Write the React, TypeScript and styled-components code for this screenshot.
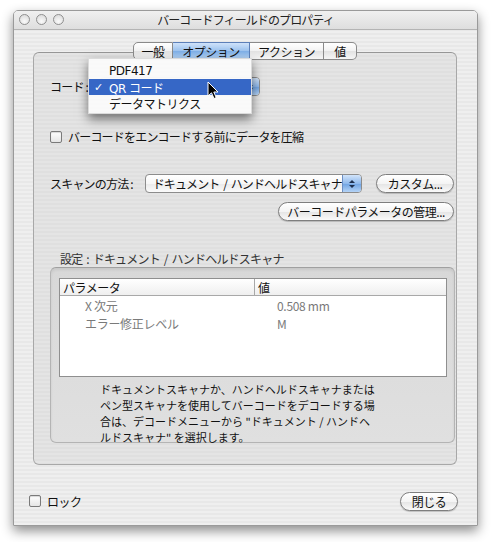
import React from "react";
import styled, { createGlobalStyle, css } from "styled-components";

const GlobalStyle = createGlobalStyle`
  body {
    margin: 0;
    background: #ffffff;
    font-family: "Noto Sans CJK JP", "Noto Sans", sans-serif;
    color: #111;
  }
`;

const Page = styled.div`
  width: 493px;
  height: 542px;
  padding: 10px 0 0 13px;
  box-sizing: border-box;
  overflow: hidden;
`;

const Window = styled.div`
  position: relative;
  width: 465px;
  height: 516px;
  box-sizing: border-box;
  border: 1px solid #9a9a9a;
  border-radius: 5px 5px 0 0;
  background: repeating-linear-gradient(
    to bottom,
    #efefef 0px,
    #efefef 2px,
    #e8e8e8 2px,
    #e8e8e8 4px
  );
  box-shadow: 0 5px 12px rgba(0, 0, 0, 0.45);
  display: flex;
  flex-direction: column;
  font-size: 12px;
`;

const TitleBar = styled.div`
  height: 19px;
  box-sizing: border-box;
  border-bottom: 1px solid #b4b4b4;
  border-radius: 4px 4px 0 0;
  background: linear-gradient(to bottom, #f0f0f0, #dedede);
  display: flex;
  align-items: center;
  padding: 0 5px 2px 5px;
`;

const Lights = styled.div`
  width: 60px;
  display: flex;
  gap: 6px;
`;

const Light = styled.span`
  width: 11px;
  height: 11px;
  box-sizing: border-box;
  border-radius: 50%;
  border: 1px solid #8f8f8f;
  background: radial-gradient(circle at 50% 70%, #fafafa, #d6d6d6);
`;

const Title = styled.div`
  flex: 1;
  text-align: center;
  font-size: 12px;
  letter-spacing: -0.9px;
  color: #222;
`;

const Body = styled.div`
  flex: 1;
  display: flex;
  flex-direction: column;
  padding: 12px 20px 0 19px;
`;

const TabArea = styled.div`
  position: relative;
  display: flex;
  flex-direction: column;
`;

const TabRow = styled.div`
  position: relative;
  z-index: 1;
  display: flex;
  justify-content: center;
  height: 18px;
`;

const Tab = styled.div<{ $active?: boolean; $w: number; $first?: boolean; $last?: boolean }>`
  width: ${(p) => p.$w}px;
  box-sizing: border-box;
  display: flex;
  align-items: center;
  justify-content: center;
  font-size: 12px;
  letter-spacing: -0.5px;
  border: 1px solid #8a8a8a;
  border-left: ${(p) => (p.$first ? "1px solid #8a8a8a" : "none")};
  border-radius: ${(p) =>
    p.$first ? "5px 0 0 5px" : p.$last ? "0 5px 5px 0" : "0"};
  background: linear-gradient(to bottom, #ffffff 0%, #f2f2f2 50%, #e2e2e2 51%, #f6f6f6 100%);
  ${(p) =>
    p.$active &&
    css`
      border-color: #5c7fb8;
      background: linear-gradient(to bottom, #cfe2fa 0%, #9cc2ee 50%, #7eaee6 51%, #b8d6f7 100%);
    `}
`;

const TabBox = styled.div`
  position: relative;
  margin-top: -8px;
  height: 413px;
  box-sizing: border-box;
  border: 1px solid #a8a8a8;
  border-top-color: #969696;
  border-radius: 6px;
  background: repeating-linear-gradient(
    to bottom,
    #e4e4e4 0px,
    #e4e4e4 2px,
    #dfdfdf 2px,
    #dfdfdf 4px
  );
  padding: 25px 2px 0 16px;
  display: flex;
  flex-direction: column;
`;

const FieldRow = styled.div<{ $top: number; $h: number }>`
  display: flex;
  align-items: center;
  height: ${(p) => p.$h}px;
  margin-top: ${(p) => p.$top}px;
`;

const Label = styled.span<{ $w?: number }>`
  font-size: 12px;
  letter-spacing: -0.8px;
  white-space: nowrap;
  width: ${(p) => (p.$w ? `${p.$w}px` : "auto")};
`;

const Popup = styled.div<{ $w: number }>`
  position: relative;
  width: ${(p) => p.$w}px;
  height: 19px;
  box-sizing: border-box;
  border: 1px solid #8c8c8c;
  border-radius: 4px;
  background: linear-gradient(to bottom, #ffffff 0%, #f7f7f7 50%, #eaeaea 51%, #fbfbfb 100%);
  display: flex;
  align-items: center;
  overflow: hidden;
`;

const PopupText = styled.span`
  flex: 1;
  padding-left: 7px;
  font-size: 12px;
  letter-spacing: -0.9px;
  word-spacing: 2px;
  white-space: nowrap;
`;

const Stepper = styled.span`
  width: 18px;
  align-self: stretch;
  border-left: 1px solid #6d8fc4;
  background: linear-gradient(to bottom, #d2e4fa 0%, #8fb9ec 50%, #6ea2e2 51%, #b4d3f6 100%);
  display: flex;
  flex-direction: column;
  align-items: center;
  justify-content: center;
  gap: 2px;
`;

const Arrow = styled.span<{ $down?: boolean }>`
  width: 0;
  height: 0;
  border-left: 3px solid transparent;
  border-right: 3px solid transparent;
  ${(p) =>
    p.$down
      ? css`border-top: 3px solid #1d2f4d;`
      : css`border-bottom: 3px solid #1d2f4d;`}
`;

const Button = styled.div<{ $w: number; $ml?: number }>`
  width: ${(p) => p.$w}px;
  margin-left: ${(p) => (p.$ml ? `${p.$ml}px` : "0")};
  height: 19px;
  box-sizing: border-box;
  border: 1px solid #7e7e7e;
  border-radius: 10px;
  background: linear-gradient(to bottom, #ffffff 0%, #f4f4f4 50%, #e4e4e4 51%, #fafafa 100%);
  box-shadow: 0 1px 1px rgba(0, 0, 0, 0.2);
  display: flex;
  align-items: center;
  justify-content: center;
  font-size: 12px;
  letter-spacing: -0.5px;
  white-space: nowrap;
`;

const RightRow = styled.div`
  display: flex;
  justify-content: flex-end;
  margin-top: 9px;
  height: 19px;
`;

const Check = styled.span`
  width: 12px;
  height: 12px;
  box-sizing: border-box;
  border: 1px solid #7a7a7a;
  border-radius: 2px;
  background: linear-gradient(to bottom, #ffffff, #e6e6e6);
  box-shadow: inset 0 1px 1px rgba(0, 0, 0, 0.15);
  margin-right: 6px;
  flex-shrink: 0;
`;

const GroupLabel = styled.div`
  margin-top: 31px;
  padding-left: 10px;
  height: 14px;
  line-height: 14px;
  font-size: 12px;
  letter-spacing: -0.8px;
  word-spacing: 2px;
  color: #333;
`;

const Group = styled.div`
  margin-top: 1px;
  height: 176px;
  margin-right: -1px;
  box-sizing: border-box;
  border: 1px solid #b4b4b4;
  border-top-color: #a0a0a0;
  border-radius: 6px;
  background: linear-gradient(to bottom, #d8d8d8, #e0e0e0);
  box-shadow: inset 0 2px 3px rgba(0, 0, 0, 0.08);
  padding: 10px 7px 0 8px;
  display: flex;
  flex-direction: column;
`;

const Table = styled.div`
  height: 99px;
  flex-shrink: 0;
  box-sizing: border-box;
  border: 1px solid #8f8f8f;
  background: #ffffff;
`;

const HeadRow = styled.div`
  display: grid;
  grid-template-columns: 194px 1fr;
  height: 16px;
  border-bottom: 1px solid #a8a8a8;
  background: linear-gradient(to bottom, #ffffff, #efefef);
`;

const HeadCell = styled.div<{ $sep?: boolean }>`
  display: flex;
  align-items: center;
  padding-left: 3px;
  font-size: 12px;
  letter-spacing: -0.5px;
  border-left: ${(p) => (p.$sep ? "1px solid #a8a8a8" : "none")};
`;

const DataRow = styled.div`
  display: grid;
  grid-template-columns: 194px 1fr;
  height: 18px;
`;

const DataCell = styled.div<{ $pl: number }>`
  display: flex;
  align-items: center;
  padding-left: ${(p) => p.$pl}px;
  font-size: 12px;
  letter-spacing: -0.3px;
  color: #7a7a7a;
`;

const Note = styled.div`
  margin-top: 4px;
  padding-left: 41px;
  font-size: 11px;
  line-height: 16px;
  white-space: nowrap;
  color: #111;
`;

const Footer = styled.div`
  flex: 1;
  display: flex;
  align-items: center;
  justify-content: space-between;
  padding: 12px 0 0 0;
  margin-left: -4px;
  margin-right: -1px;
`;

const CheckLabel = styled.label`
  display: flex;
  align-items: center;
  font-size: 12px;
  letter-spacing: -0.5px;
`;

const Menu = styled.div`
  position: absolute;
  left: 54px;
  top: 5px;
  width: 164px;
  height: 56px;
  box-sizing: border-box;
  padding-top: 4px;
  background: rgba(250, 250, 250, 0.97);
  border: 1px solid rgba(0, 0, 0, 0.12);
  box-shadow: 0 5px 10px rgba(0, 0, 0, 0.5);
  z-index: 3;
`;

const MenuItem = styled.div<{ $hl?: boolean }>`
  position: relative;
  height: 16px;
  display: flex;
  align-items: center;
  padding-left: 20px;
  font-family: "DejaVu Sans", "Noto Sans CJK JP", sans-serif;
  font-size: 12px;
  letter-spacing: -0.5px;
  color: ${(p) => (p.$hl ? "#ffffff" : "#111")};
  background: ${(p) => (p.$hl ? "#3667c6" : "transparent")};
`;

const Tick = styled.span`
  position: absolute;
  left: 5px;
  font-size: 11px;
`;

const Cursor = styled.svg`
  position: absolute;
  left: 173px;
  top: 28px;
  z-index: 4;
`;

export default function App() {
  return (
    <>
      <GlobalStyle />
      <Page>
        <Window>
          <TitleBar>
            <Lights>
              <Light />
              <Light />
              <Light />
            </Lights>
            <Title>バーコードフィールドのプロパティ</Title>
            <Lights />
          </TitleBar>
          <Body>
            <TabArea>
              <TabRow>
                <Tab $w={40} $first>一般</Tab>
                <Tab $w={77} $active>オプション</Tab>
                <Tab $w={74}>アクション</Tab>
                <Tab $w={33} $last>値</Tab>
              </TabRow>
              <TabBox>
                <FieldRow $top={0} $h={17}>
                  <Label $w={50}>コード :</Label>
                  <Popup $w={160}>
                    <PopupText />
                    <Stepper>
                      <Arrow />
                      <Arrow $down />
                    </Stepper>
                  </Popup>
                </FieldRow>

                <FieldRow $top={35} $h={13}>
                  <Check />
                  <Label>バーコードをエンコードする前にデータを圧縮</Label>
                </FieldRow>

                <FieldRow $top={31} $h={19}>
                  <Label $w={95}>スキャンの方法 :</Label>
                  <Popup $w={218}>
                    <PopupText>ドキュメント / ハンドヘルドスキャナ</PopupText>
                    <Stepper>
                      <Arrow />
                      <Arrow $down />
                    </Stepper>
                  </Popup>
                  <Button $w={78} $ml={14}>カスタム...</Button>
                </FieldRow>

                <RightRow>
                  <Button $w={176}>バーコードパラメータの管理...</Button>
                </RightRow>

                <GroupLabel>設定 : ドキュメント / ハンドヘルドスキャナ</GroupLabel>
                <Group>
                  <Table>
                    <HeadRow>
                      <HeadCell>パラメータ</HeadCell>
                      <HeadCell $sep>値</HeadCell>
                    </HeadRow>
                    <DataRow>
                      <DataCell $pl={25}>X 次元</DataCell>
                      <DataCell $pl={23}>0.508 mm</DataCell>
                    </DataRow>
                    <DataRow>
                      <DataCell $pl={25}>エラー修正レベル</DataCell>
                      <DataCell $pl={23}>M</DataCell>
                    </DataRow>
                  </Table>
                  <Note>
                    ドキュメントスキャナか、ハンドヘルドスキャナまたは
                    <br />
                    ペン型スキャナを使用してバーコードをデコードする場
                    <br />
                    合は、デコードメニューから "ドキュメント / ハンドヘ
                    <br />
                    ルドスキャナ" を選択します。
                  </Note>
                </Group>

                <Menu>
                  <MenuItem>PDF417</MenuItem>
                  <MenuItem $hl>
                    <Tick>✓</Tick>QR コード
                  </MenuItem>
                  <MenuItem>データマトリクス</MenuItem>
                </Menu>
                <Cursor width="13" height="20" viewBox="0 0 13 20">
                  <path
                    d="M1 1 L1 15 L4.5 11.8 L7 17.5 L9.2 16.6 L6.8 11 L11 11 Z"
                    fill="#000"
                    stroke="#fff"
                    strokeWidth="1"
                    strokeLinejoin="round"
                  />
                </Cursor>
              </TabBox>
            </TabArea>
            <Footer>
              <CheckLabel>
                <Check />
                ロック
              </CheckLabel>
              <Button $w={58}>閉じる</Button>
            </Footer>
          </Body>
        </Window>
      </Page>
    </>
  );
}
